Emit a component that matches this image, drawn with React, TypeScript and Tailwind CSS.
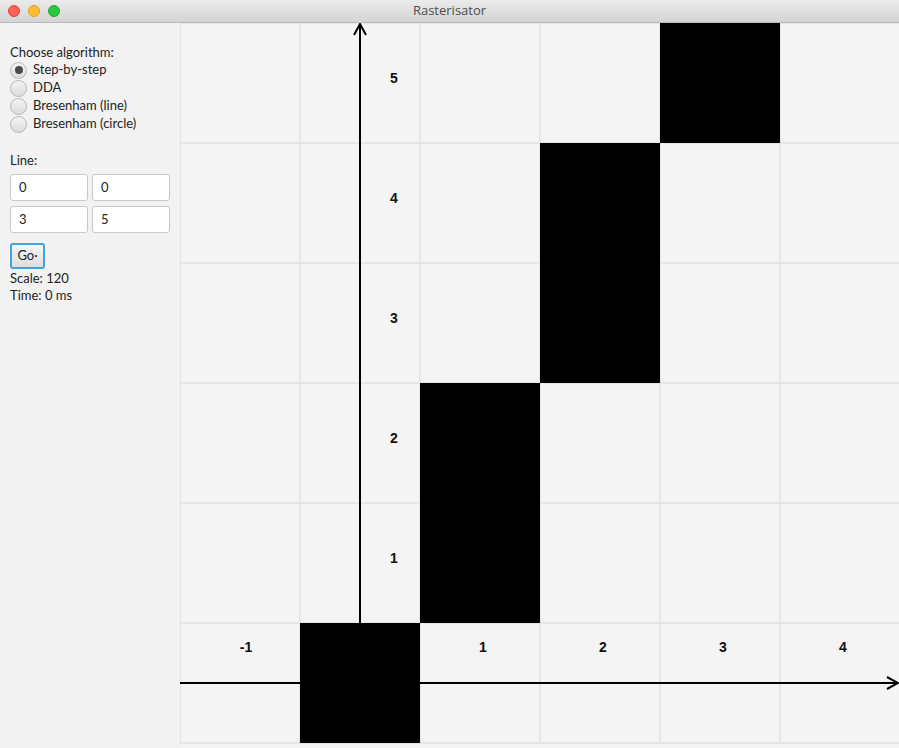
import React from "react";

const CELL = 120;
const COLS = 6;
const ROWS = 6;
// cells lit by the rasteriser, in grid coordinates
const filled = [
  [0, 0],
  [1, 1],
  [1, 2],
  [2, 3],
  [2, 4],
  [3, 5],
];

const algorithms = ["Step-by-step", "DDA", "Bresenham (line)", "Bresenham (circle)"];

function Radio({ label, checked }: { label: string; checked?: boolean }) {
  return (
    <label className="flex items-center gap-[6px] h-[18px]">
      <span className="w-[17px] h-[17px] rounded-full border border-[#b8b8b8] bg-gradient-to-b from-[#f4f4f4] to-[#dcdcdc] flex items-center justify-center">
        {checked && <span className="w-[8px] h-[8px] rounded-full bg-[#4a4a4a]" />}
      </span>
      <span>{label}</span>
    </label>
  );
}

function Field({ value }: { value: string }) {
  return (
    <div className="w-[78px] h-[27px] bg-white border border-[#c8c8c8] rounded-[3px] px-[8px] flex items-center">
      {value}
    </div>
  );
}

function Canvas() {
  const w = 719;
  const h = 725;
  const toX = (gx: number) => (gx + 1) * CELL;
  const toY = (gy: number) => (5 - gy) * CELL;
  return (
    <svg width={w} height={h} className="block" style={{ fontFamily: "Liberation Sans, Arial, sans-serif" }}>
      <rect width={w} height={h} fill="#f4f4f4" />
      {Array.from({ length: COLS + 1 }).map((_, i) => (
        <line key={"v" + i} x1={i * CELL} y1={0} x2={i * CELL} y2={ROWS * CELL} stroke="#e0e0e0" strokeWidth={1.5} />
      ))}
      {Array.from({ length: ROWS + 1 }).map((_, i) => (
        <line key={"h" + i} x1={0} y1={i * CELL} x2={w} y2={i * CELL} stroke="#e0e0e0" strokeWidth={1.5} />
      ))}
      {filled.map(([gx, gy]) => (
        <rect key={gx + "-" + gy} x={toX(gx)} y={toY(gy)} width={CELL} height={CELL} fill="#000" />
      ))}
      {/* y axis */}
      <line x1={180} y1={1} x2={180} y2={600} stroke="#000" strokeWidth={2} />
      <polyline points="174,12 180,1 186,12" fill="none" stroke="#000" strokeWidth={2} />
      {/* x axis */}
      <line x1={0} y1={660} x2={718} y2={660} stroke="#000" strokeWidth={2} />
      <polyline points="707,654 718,660 707,666" fill="none" stroke="#000" strokeWidth={2} />
      {[1, 2, 3, 4, 5].map((n) => (
        <text key={"yl" + n} x={214} y={toY(n) + 56} fontSize={14} fontWeight="bold" textAnchor="middle" dominantBaseline="middle" fill="#111">
          {n}
        </text>
      ))}
      {[-1, 1, 2, 3, 4].map((n) => (
        <text key={"xl" + n} x={toX(n) + (n < 0 ? 66 : 63)} y={625} fontSize={14} fontWeight="bold" textAnchor="middle" dominantBaseline="middle" fill="#111">
          {n}
        </text>
      ))}
    </svg>
  );
}

export default function App() {
  return (
    <div className="w-[899px] h-[748px] overflow-hidden bg-[#f2f2f2] flex flex-col text-[13px] text-[#222]" style={{ fontFamily: "Lato, 'Liberation Sans', sans-serif" }}>
      <div className="h-[23px] shrink-0 relative flex items-center justify-center bg-gradient-to-b from-[#ebebeb] to-[#d4d4d4] border-b border-[#b9b9b9]">
        <div className="absolute left-[8px] top-[5px] flex gap-[8px]">
          <span className="w-[12px] h-[12px] rounded-full bg-[#fe5f57] border border-[#e0443e]" />
          <span className="w-[12px] h-[12px] rounded-full bg-[#febc2e] border border-[#dea123]" />
          <span className="w-[12px] h-[12px] rounded-full bg-[#28c840] border border-[#1aab29]" />
        </div>
        <span className="text-[#4d4d4d] text-[13px]" style={{ fontFamily: "'Open Sans', 'Liberation Sans', sans-serif" }}>Rasterisator</span>
      </div>
      <div className="flex flex-1 min-h-0">
        <div className="w-[180px] shrink-0 px-[10px] pt-[21px] flex flex-col">
          <div className="leading-[16px]">Choose algorithm:</div>
          <div className="flex flex-col mt-[1px]">
            {algorithms.map((a, i) => (
              <Radio key={a} label={a} checked={i === 0} />
            ))}
          </div>
          <div className="mt-[19px] leading-[16px]">Line:</div>
          <div className="grid grid-cols-2 gap-x-[4px] gap-y-[5px] mt-[6px] w-[160px]">
            <Field value="0" />
            <Field value="0" />
            <Field value="3" />
            <Field value="5" />
          </div>
          <button className="mt-[10px] w-[35px] h-[26px] rounded-[3px] border-2 border-[#3fa4e0] bg-gradient-to-b from-[#f6f6f6] to-[#dedede] text-[13px] text-[#222]">
            Go·
          </button>
          <div className="mt-[1px] leading-[17px]">Scale: 120</div>
          <div className="leading-[17px]">Time: 0 ms</div>
        </div>
        <Canvas />
      </div>
    </div>
  );
}
